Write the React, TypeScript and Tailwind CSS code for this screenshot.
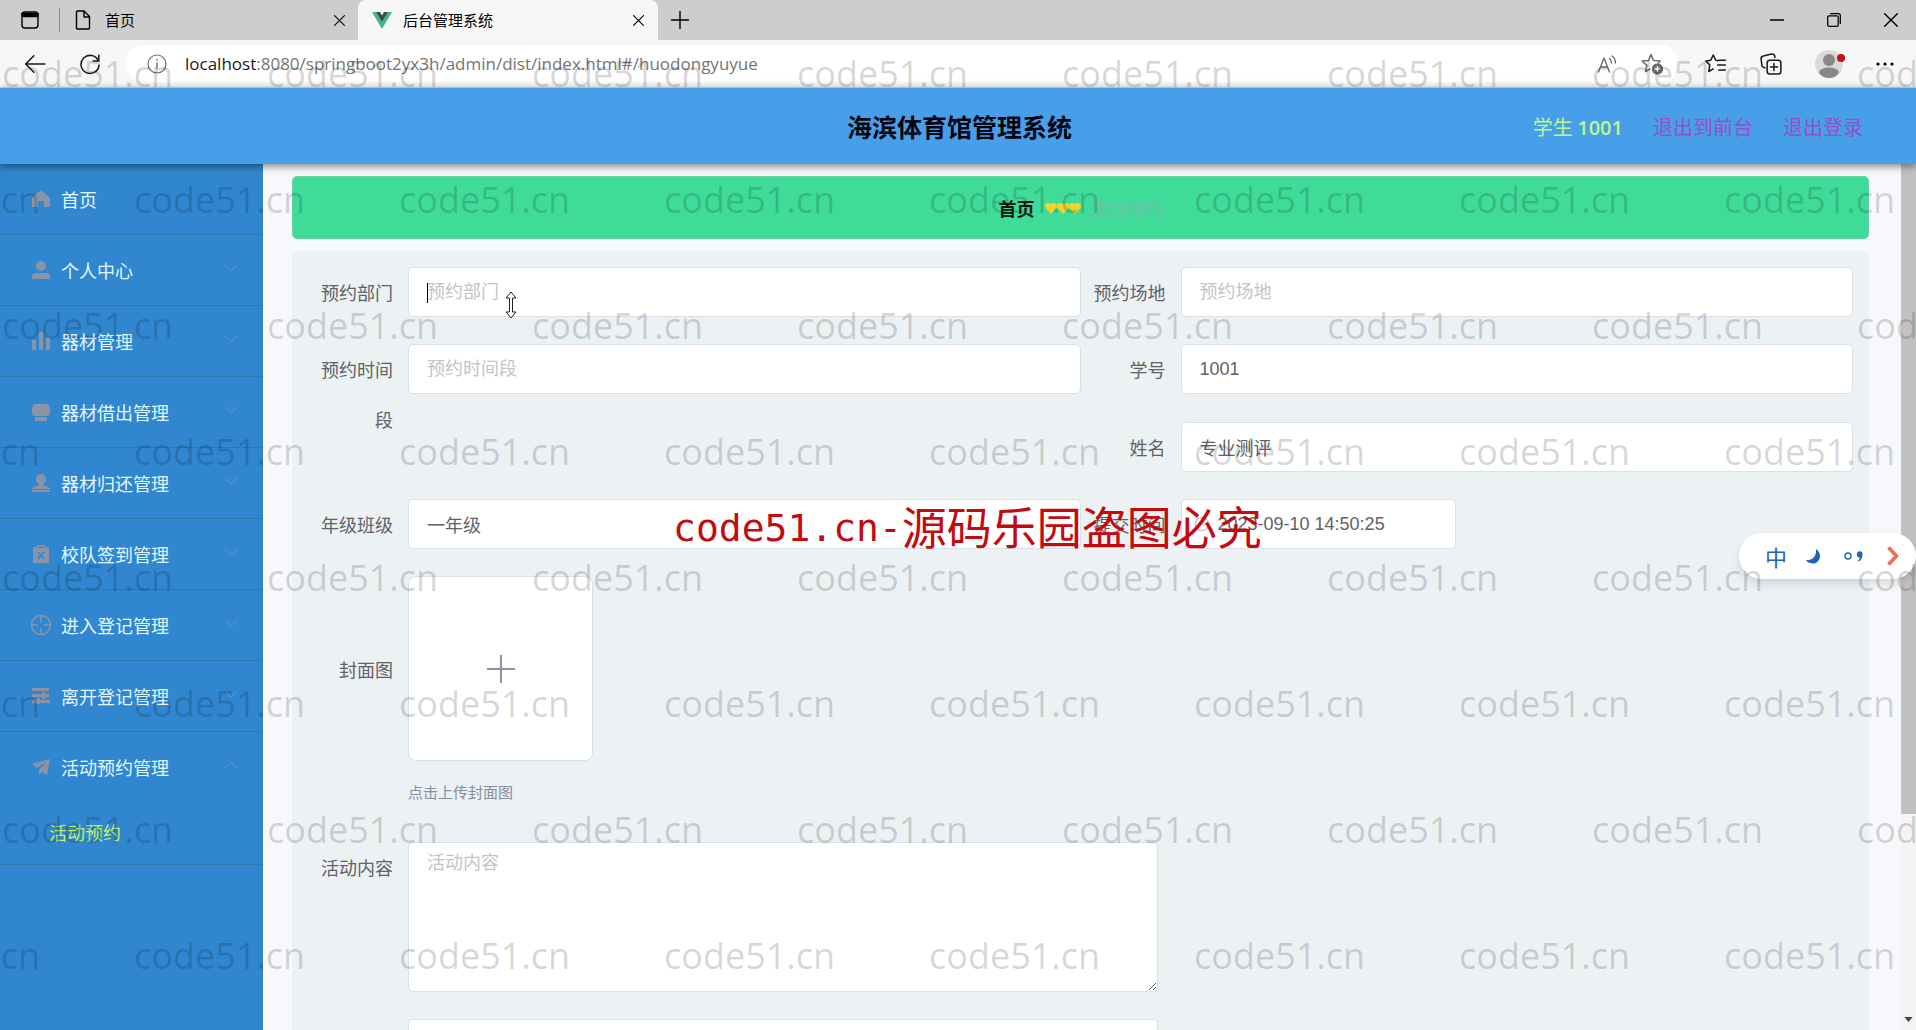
import type { ReactNode } from "react";
import { Clock } from "lucide-react";

/* ---------- Sidebar data ---------- */

const menuItems: { label: string; icon: ReactNode; child?: string }[] = [
	{
		label: "首页",
		icon: <path d="M9 0 0 8v9h6v-6h6v6h6V8z" />,
	},
	{
		label: "个人中心",
		icon: <path d="M9 0a5 5 0 1 0 0 10A5 5 0 0 0 9 0zM0 18v-4l2-2h14l2 2v4z" />,
	},
	{
		label: "器材管理",
		icon: <path d="M0 8h4v10H0zM7 0h4v18H7zM14 5h4v13h-4z" />,
	},
	{
		label: "器材借出管理",
		icon: (
			<path d="M2 1h14l2 4v6a3 3 0 0 1-2 2H2a3 3 0 0 1-2-2V5zM3 14h12v4H3z" />
		),
	},
	{
		label: "器材归还管理",
		icon: (
			<path d="M9 0a5 5 0 0 0-3 9l1 2-7 3v1h18v-1l-7-3 1-2a5 5 0 0 0-3-9zM0 16h18v2H0z" />
		),
	},
	{
		label: "校队签到管理",
		icon: (
			<path
				fillRule="evenodd"
				d="M1 2h4V0h8v2h4v16H1zM5 7l3 3-3 4h2l2-2 2 2h2l-3-4 3-3h-2L9 9 7 7zM6 2v1h6V2z"
			/>
		),
	},
	{
		label: "进入登记管理",
		icon: (
			<path
				fill="none"
				stroke="currentColor"
				strokeWidth="1.5"
				d="M9-.5a9.500 9.500 0 1 0 0 19A9.500 9.500 0 0 0 9-.5zM9 0v6M9 12v6M0 9h6M12 9h6"
			/>
		),
	},
	{
		label: "离开登记管理",
		icon: (
			<path d="M0 1h17v3H0zM0 7h10V5h3v2h4v3h-4v2h-3v-2H0zM0 13h5v-2h3v2h10v3H8v1H5v-1H0z" />
		),
	},
	{
		label: "活动预约管理",
		icon: <path d="M18 1 0 6l5 4 9-6-7 8v5l3-3 5 3z" />,
		child: "活动预约",
	},
];

const watermarkRows = [0, 1, 2, 3, 4, 5, 6, 7];
const watermarkCols = [0, 1, 2, 3, 4, 5, 6, 7];

/* ---------- Browser chrome ---------- */

interface StrokeIconProps {
	className?: string;
	children: ReactNode;
}

const StrokeIcon = ({ className = "size-5", children }: StrokeIconProps) => (
	<svg
		viewBox="0 0 20 20"
		className={`shrink-0 ${className}`}
		fill="none"
		stroke="currentColor"
		strokeWidth="1.4"
		strokeLinecap="round"
		strokeLinejoin="round"
		aria-hidden="true"
	>
		{children}
	</svg>
);

const CloseIcon = ({ className }: { className: string }) => (
	<StrokeIcon className={className}>
		<path d="M1 1l18 18M19 1 1 19" strokeWidth="2" />
	</StrokeIcon>
);

const TabStrip = () => (
	<div className="flex h-10 items-center bg-[#cdcdcd] text-[15px] text-black">
		<button aria-label="标签页操作" className="ml-5">
			<StrokeIcon>
				<rect x="2" y="2" width="16" height="16" rx="3" />
				<path d="M2 3.500h16v3H2z" fill="currentColor" />
			</StrokeIcon>
		</button>
		<div className="ml-[19px] h-6 w-px bg-[#8a8a8a]" />
		<div className="flex w-[298px] items-center px-[13px]">
			<StrokeIcon>
				<path d="M4 1h7l5.500 5.500V18a1 1 0 0 1-1 1H4.500a1 1 0 0 1-1-1V2zM11 1v6h5.500" />
			</StrokeIcon>
			<span className="ml-3 flex-1">首页</span>
			<button aria-label="关闭标签页">
				<CloseIcon className="size-[11px]" />
			</button>
		</div>
		<div className="flex w-[300px] items-center self-stretch rounded-t-lg bg-[#f7f7f7] px-[14px]">
			<svg viewBox="0 0 20 17" className="h-[17px] w-5" aria-hidden="true">
				<path d="M0 0h4l6 10 6-10h4L10 17z" fill="#41b883" />
				<path d="M4 0h4l2 3.500L12 0h4l-6 10z" fill="#34495e" />
			</svg>
			<span className="ml-[11px] flex-1">后台管理系统</span>
			<button aria-label="关闭标签页">
				<CloseIcon className="size-[11px]" />
			</button>
		</div>
		<button aria-label="新建标签页" className="ml-3">
			<StrokeIcon>
				<path d="M10 1.500v17M1.500 10h17" />
			</StrokeIcon>
		</button>
		<div className="ml-auto flex items-center gap-[43px] pr-[18px]">
			<button aria-label="最小化">
				<StrokeIcon className="size-[14px]">
					<path d="M0 10h20" strokeWidth="2" />
				</StrokeIcon>
			</button>
			<button aria-label="还原">
				<StrokeIcon className="size-[14px]">
					<rect x="1" y="4" width="15" height="15" rx="2" strokeWidth="1.800" />
					<path d="M5 1h11a3 3 0 0 1 3 3v11" strokeWidth="1.800" />
				</StrokeIcon>
			</button>
			<button aria-label="关闭">
				<CloseIcon className="size-[14px]" />
			</button>
		</div>
	</div>
);

const AddressBar = () => (
	<div className="flex h-12 items-center border-b border-[#dcdcdc] bg-[#f7f7f7] text-[#1a1a1a]">
		<button aria-label="后退" className="ml-6">
			<StrokeIcon className="size-[22px]">
				<path d="M19 10H2M9 2.500 1.500 10 9 17.500" />
			</StrokeIcon>
		</button>
		<button aria-label="刷新" className="ml-[33px]">
			<StrokeIcon className="size-[22px]">
				<path d="M17.500 7A8.200 8.200 0 1 0 18.200 11M18 2v5.200h-5.200" />
			</StrokeIcon>
		</button>
		<div className="ml-[25px] flex h-[37px] flex-1 items-center rounded-full bg-white pr-4 pl-[21px]">
			<StrokeIcon className="size-5 text-[#6b6b6b]">
				<circle cx="10" cy="10" r="9" strokeWidth="1.200" />
				<path d="M10 9v5.500M10 5.500v.500" />
			</StrokeIcon>
			<span className="ml-[18px] flex-1 font-['Open_Sans','Noto_Sans',sans-serif] text-[17px] text-[#757575]">
				<span className="text-[#1a1a1a]">localhost</span>
				:8080/springboot2yx3h/admin/dist/index.html#/huodongyuyue
			</span>
			<button aria-label="大声朗读" className="text-[#6b6b6b]">
				<StrokeIcon>
					<path d="M1.500 18 7 4l5.500 14M3.500 13h7M12.500 4.500a6 6 0 0 1 2 4.500M15 2a9 9 0 0 1 3.500 7" />
				</StrokeIcon>
			</button>
			<button aria-label="收藏此页" className="ml-6 text-[#6b6b6b]">
				<StrokeIcon className="size-[22px]">
					<path d="M9 1.500 6.800 6.800 1 7.300l4.300 4L4 17l4-2.300M9 1.500l2.400 5.300 6 .500-1.400 1.500" />
					<circle cx="15" cy="14.500" r="4.500" fill="currentColor" />
					<path d="M15 12.500v4M13 14.500h4" stroke="#fff" />
				</StrokeIcon>
			</button>
		</div>
		<div className="ml-[26px] flex items-center gap-[33px]">
			<button aria-label="收藏夹">
				<StrokeIcon className="size-[22px]">
					<path d="M12 7 9.800 6.600 7.500 1.800 5.200 6.600.800 7.200l3.500 3.600-.800 6 4-2.300M12.500 6.500h6M11.500 11h7M12.500 15.500h6" />
				</StrokeIcon>
			</button>
			<button aria-label="集锦">
				<StrokeIcon className="size-[22px]">
					<rect x="6.500" y="6.500" width="12.500" height="12.500" rx="2.500" />
					<path d="M12.700 9.500v6.500M9.500 12.700H16M4.500 13.500 3.300 13a2.500 2.500 0 0 1-1.500-1.500L1 5.500A2.500 2.500 0 0 1 3 2.800L10.500 1a2.500 2.500 0 0 1 3 2v1" />
				</StrokeIcon>
			</button>
			<button aria-label="个人资料" className="relative">
				<svg viewBox="0 0 28 28" className="size-7" aria-hidden="true">
					<circle cx="14" cy="14" r="14" fill="#dcdad9" />
					<circle cx="14" cy="10" r="6" fill="#8a8886" />
					<path d="M4 22c2-6 18-6 20 0-3 8-17 8-20 0z" fill="#8a8886" />
				</svg>
				<span className="absolute top-1 -right-0.5 size-2 rounded-full bg-[#c50f1f]" />
			</button>
			<button aria-label="设置及其他" className="mr-[22px]">
				<svg viewBox="0 0 18 4" className="h-1 w-[18px]" aria-hidden="true">
					<circle cx="2" cy="2" r="1.600" />
					<circle cx="9" cy="2" r="1.600" />
					<circle cx="16" cy="2" r="1.600" />
				</svg>
			</button>
		</div>
	</div>
);

/* ---------- Admin layout ---------- */

const Header = () => (
	<header className="relative z-10 grid h-19 grid-cols-[1fr_auto_1fr] items-center bg-[#489fe9] pt-0.5 pr-[53px] pl-14 shadow-[0_2px_8px_rgba(0,0,0,0.5)]">
		<h1 className="col-start-2 text-[25px] font-bold text-[#02040f]">
			海滨体育馆管理系统
		</h1>
		<nav className="flex justify-end gap-[30px] text-xl text-[#9450c4]">
			<span className="text-[#bdf68c]">
				学生{" "}
				<span className="font-['Open_Sans','Noto_Sans',sans-serif] font-semibold">
					1001
				</span>
			</span>
			<a href="#/front">退出到前台</a>
			<a href="#/login">退出登录</a>
		</nav>
	</header>
);

const Sidebar = () => (
	<aside className="w-[263px] shrink-0 border-r border-[#3b7fae] bg-[#3187cf]">
		<ul>
			{menuItems.map((item, index) => (
				<li key={item.label} className="border-b border-[#2f789f]">
					<a
						href="#"
						className="flex h-[70px] items-center pr-[25px] pl-8 text-lg text-[#e2f7ff]"
					>
						<svg
							viewBox="0 0 18 18"
							className="size-[18px] overflow-visible text-[#8b93a6]"
							fill="currentColor"
							aria-hidden="true"
						>
							{item.icon}
						</svg>
						<span className="ml-[11px] flex-1">{item.label}</span>
						{index > 0 && (
							<svg
								viewBox="0 0 12 12"
								className={`mb-1 size-3 text-[#6696c2] ${item.child ? "rotate-180" : ""}`}
								fill="none"
								stroke="currentColor"
								aria-hidden="true"
							>
								<path d="M0 3l6 6 6-6" />
							</svg>
						)}
					</a>
					{item.child && (
						<a
							href="#/huodongyuyue"
							className="flex h-[62px] items-center pb-0.5 pl-[49px] text-lg text-[#bff06a]"
						>
							{item.child}
						</a>
					)}
				</li>
			))}
		</ul>
	</aside>
);

const YellowHeart = () => (
	<svg viewBox="0 0 12 12" className="size-3" fill="#f5d32c">
		<path d="M6 12 .500 6C-.500 3.500 0 1 3 1c1.500 0 2.500.500 3 1.500C6.500 1.500 7.500 1 9 1c3 0 3.500 2.500 2.500 5z" />
	</svg>
);

const Breadcrumb = () => (
	<div className="flex h-[63px] items-center justify-center rounded-[5px] border border-[#67d3a4] bg-[#3fdc99] text-lg">
		<a href="#/" className="font-bold text-[#07180f]">
			首页
		</a>
		<span className="mx-[10px] flex" aria-hidden="true">
			<YellowHeart />
			<YellowHeart />
			<YellowHeart />
		</span>
		<span className="text-[#6ac3a6]">活动预约</span>
	</div>
);

/* ---------- Form ---------- */

const controlClass =
	"block rounded-[5px] border border-[#dcdfe6] bg-white font-['Liberation_Sans','Noto_Sans_CJK_SC',sans-serif] text-lg text-[#606266] placeholder:text-[#c3c5c9] outline-none";

interface FieldProps {
	id: string;
	label: string;
	children: ReactNode;
}

const Field = ({ id, label, children }: FieldProps) => (
	<div className="flex items-start">
		<label
			htmlFor={id}
			className="w-[100px] shrink-0 pr-[15px] text-right text-lg leading-[50px] text-[#606266]"
		>
			{label}
		</label>
		<div className="relative min-w-0 flex-1">{children}</div>
	</div>
);

interface TextFieldProps {
	id: string;
	label: string;
	value?: string;
}

const TextField = ({ id, label, value }: TextFieldProps) => (
	<Field id={id} label={label}>
		<input
			id={id}
			type="text"
			defaultValue={value}
			placeholder={label}
			className={`${controlClass} h-[50px] w-full px-[18px]`}
		/>
	</Field>
);

const BookingForm = () => (
	<form className="mt-3 flex flex-col gap-[27px] rounded-[5px] bg-[#ecf1f4] px-4 pt-4 pb-10">
		<div className="grid grid-cols-2">
			<Field id="department" label="预约部门">
				<input
					id="department"
					type="text"
					placeholder="预约部门"
					className={`${controlClass} h-[50px] w-full px-[18px]`}
				/>
				{/* caret and resize pointer */}
				<span className="absolute top-4 left-[19px] h-5 w-px bg-black" />
				<svg
					viewBox="0 0 12 28"
					className="absolute top-6 left-[97px] h-7 w-3"
					fill="#fff"
					stroke="#222"
					strokeLinejoin="round"
					aria-hidden="true"
				>
					<path d="M6 1 1 7h3.500v14H1l5 6 5-6H7.500V7H11z" />
				</svg>
			</Field>
			<TextField id="venue" label="预约场地" />
		</div>
		<div className="grid grid-cols-2">
			<TextField id="period" label="预约时间段" />
			<div className="flex flex-col gap-7">
				<TextField id="student-no" label="学号" value="1001" />
				<TextField id="student-name" label="姓名" value="专业测评" />
			</div>
		</div>
		<div className="grid grid-cols-2">
			<TextField id="grade" label="年级班级" value="一年级" />
			<Field id="submit-time" label="提交时间">
				<Clock className="absolute top-[17px] left-[13px] size-4 text-[#c0c4cc]" />
				<input
					id="submit-time"
					type="text"
					defaultValue="2023-09-10 14:50:25"
					className={`${controlClass} h-[50px] w-[275px] pr-3 pl-9`}
				/>
			</Field>
		</div>
		<div>
			<div className="flex items-center">
				<span
					id="cover-label"
					className="w-[100px] pr-[15px] text-right text-lg text-[#606266]"
				>
					封面图
				</span>
				<button
					type="button"
					aria-labelledby="cover-label"
					className="flex size-[185px] items-center justify-center rounded-lg border border-[#dcdfe6] bg-white text-[#8c939d]"
				>
					<svg viewBox="0 0 28 28" className="size-7" aria-hidden="true">
						<path d="M14 0v28M0 14h28" stroke="currentColor" strokeWidth="2" />
					</svg>
				</button>
			</div>
			<p className="mt-2 ml-[100px] text-[15px] leading-[46px] text-[#838fa0]">
				点击上传封面图
			</p>
		</div>
		<Field id="content" label="活动内容">
			<textarea
				id="content"
				placeholder="活动内容"
				className={`${controlClass} h-[150px] w-[750px] resize-y px-[18px] py-[6px]`}
			/>
		</Field>
		<div className="ml-[100px]">
			<textarea
				aria-label="备注"
				className={`${controlClass} h-[150px] w-[750px] resize-y px-[18px] py-[6px]`}
			/>
		</div>
	</form>
);

const ScrollBar = () => (
	<div className="flex w-[15px] shrink-0 flex-col justify-between bg-[#f4f4f4]">
		<div className="h-3/4 bg-[#c1c1c1]" />
		<svg
			viewBox="0 0 10 6"
			className="mb-2 h-[5px] w-[9px] self-center"
			fill="#444"
			aria-hidden="true"
		>
			<path d="M0 0h10L5 6z" />
		</svg>
	</div>
);

/* ---------- Overlays ---------- */

const ImeBar = () => (
	<div className="absolute top-[533px] right-0 flex h-[46px] w-[177px] items-center rounded-full bg-white pl-[26px] text-[#2464b4] shadow-[0_5px_8px_rgba(0,0,0,0.12)]">
		<span className="text-[22px] leading-none">中</span>
		<svg
			viewBox="0 0 16 16"
			className="ml-[18px] size-4"
			fill="currentColor"
			aria-hidden="true"
		>
			<path d="M11 1c8 5 3 17-6 14-2-.500-4-2-4-3 5 1 11-3 10-11z" />
		</svg>
		<svg
			viewBox="0 0 20 12"
			className="ml-[23px] h-3 w-5"
			fill="currentColor"
			aria-hidden="true"
		>
			<circle
				cx="4"
				cy="6"
				r="3"
				fill="none"
				stroke="currentColor"
				strokeWidth="1.400"
			/>
			<path d="M13 4a2.700 2.700 0 1 1 5.500 0c0 4-1.500 6.500-4 7.500l-.500-1c1.200-.800 1.700-2 1.700-3A2.700 2.700 0 0 1 13 4z" />
		</svg>
		<svg
			viewBox="0 0 12 20"
			className="ml-[23px] h-5 w-3"
			fill="none"
			stroke="#ee6c4e"
			strokeWidth="3.500"
			aria-hidden="true"
		>
			<path d="M1.500 1.500 9.500 10l-8 8.500" />
		</svg>
	</div>
);

const Watermark = () => (
	<div className="pointer-events-none absolute inset-0 overflow-hidden">
		<div className="pt-[11px] pl-[2px] font-['Open_Sans','Noto_Sans',sans-serif] text-4xl text-black/17">
			{watermarkRows.map((row) => (
				<div
					key={row}
					className={`flex h-[126px] items-center ${row % 2 ? "-ml-[133px]" : ""}`}
				>
					{watermarkCols.map((col) => (
						<span key={col} className="w-[265px] shrink-0">
							code51.cn
						</span>
					))}
				</div>
			))}
		</div>
		<p className="absolute top-[498px] left-[673px] flex items-center text-[45px] leading-[52px] whitespace-nowrap text-[#c40a0f]">
			<span className="pt-1 font-['DejaVu_Sans_Mono',monospace] text-[38px]">
				code51.cn-
			</span>
			源码乐园盗图必究
		</p>
	</div>
);

const App = () => (
	<div className="relative flex h-screen flex-col overflow-hidden bg-[#f6f8fb] font-['Noto_Sans_CJK_SC',sans-serif]">
		<TabStrip />
		<AddressBar />
		<Header />
		<div className="flex min-h-0 flex-1">
			<Sidebar />
			<main className="min-w-0 flex-1 overflow-hidden pt-3 pr-8 pl-[29px]">
				<Breadcrumb />
				<BookingForm />
			</main>
			<ScrollBar />
		</div>
		<ImeBar />
		<Watermark />
	</div>
);

export default App;
